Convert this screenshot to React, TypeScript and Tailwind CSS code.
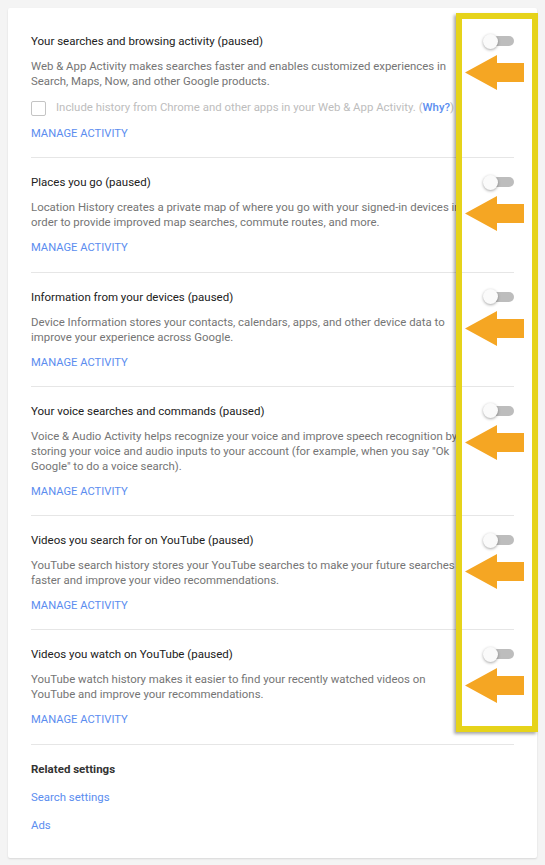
import React from 'react';

type Section = {
  title: string;
  lines: string;
  checkbox?: boolean;
};

const sections: Section[] = [
  {
    title: 'Your searches and browsing activity (paused)',
    lines:
      'Web & App Activity makes searches faster and enables customized experiences in Search, Maps, Now, and other Google products.',
    checkbox: true,
  },
  {
    title: 'Places you go (paused)',
    lines:
      'Location History creates a private map of where you go with your signed-in devices in order to provide improved map searches, commute routes, and more.',
  },
  {
    title: 'Information from your devices (paused)',
    lines:
      'Device Information stores your contacts, calendars, apps, and other device data to improve your experience across Google.',
  },
  {
    title: 'Your voice searches and commands (paused)',
    lines:
      'Voice & Audio Activity helps recognize your voice and improve speech recognition by storing your voice and audio inputs to your account (for example, when you say "Ok Google" to do a voice search).',
  },
  {
    title: 'Videos you search for on YouTube (paused)',
    lines:
      'YouTube search history stores your YouTube searches to make your future searches faster and improve your video recommendations.',
  },
  {
    title: 'Videos you watch on YouTube (paused)',
    lines:
      'YouTube watch history makes it easier to find your recently watched videos on YouTube and improve your recommendations.',
  },
];

// Switch in the off position
function Toggle() {
  return (
    <div className="relative flex h-4 w-[31px] items-center">
      <div className="ml-[3px] h-[10px] w-[28px] rounded-full bg-[#bdbdbd]" />
      <div className="absolute left-0 top-[0.5px] h-[15px] w-[15px] rounded-full bg-[#fafafa] shadow-[0_1px_3px_rgba(0,0,0,0.35)]" />
    </div>
  );
}

function Arrow() {
  return (
    <svg width="59" height="35" viewBox="0 0 59 35" className="absolute left-[4px] top-[22px]">
      <polygon points="0,17.5 32,0 32,8 59,8 59,27 32,27 32,35" fill="#f5a623" />
    </svg>
  );
}

function SettingSection({ section }: { section: Section }) {
  return (
    <div className="flex border-b border-[#e6e6e6] pb-[15.3px] pt-4">
      <div className="w-[430px]">
        <div className="text-[11.5px] leading-4 text-[#212121]">{section.title}</div>
        <p className="mt-[10px] text-[11.4px] leading-[15px] text-[#757575]">{section.lines}</p>
        {section.checkbox && (
          <div className="mt-[10px] flex h-[18px] items-center">
            <div className="h-[15px] w-[15px] shrink-0 rounded-[2px] border-[1.5px] border-[#c4c4c4]" />
            <span className="ml-[10px] whitespace-nowrap text-[11.4px] text-[#bdbdbd]">
              Include history from Chrome and other apps in your Web &amp; App Activity. (
              <span className="font-medium text-[#5b8def]">Why?</span>)
            </span>
          </div>
        )}
        <div
          className={`${section.checkbox ? 'mt-[9px]' : 'mt-[10px]'} text-[11.2px] leading-4 text-[#5b8def]`}
        >
          MANAGE ACTIVITY
        </div>
      </div>
      <div className="relative flex flex-1 justify-end">
        <Toggle />
        <Arrow />
      </div>
    </div>
  );
}

export default function App() {
  return (
    <div className="relative min-h-[865px] bg-[#f4f4f4] p-2 font-['Roboto',sans-serif]">
      <div className="rounded-[2px] bg-white px-[23px] pb-[25px] pt-[9px] shadow-[0_1px_2px_rgba(0,0,0,0.12)]">
        {sections.map((s) => (
          <SettingSection key={s.title} section={s} />
        ))}
        <div className="pt-4">
          <div className="text-[11.5px] font-bold leading-4 text-[#333333]">Related settings</div>
          <div className="mt-[12px] text-[11.4px] leading-4 text-[#5b8def]">Search settings</div>
          <div className="mt-[12px] text-[11.4px] leading-4 text-[#5b8def]">Ads</div>
        </div>
      </div>

      {/* annotation frame */}
      <div className="pointer-events-none absolute left-[456px] top-[13px] h-[719px] w-[82px] border-[6px] border-[#e6d31a] shadow-[-2px_2px_3px_rgba(0,0,0,0.35)]" />
    </div>
  );
}
